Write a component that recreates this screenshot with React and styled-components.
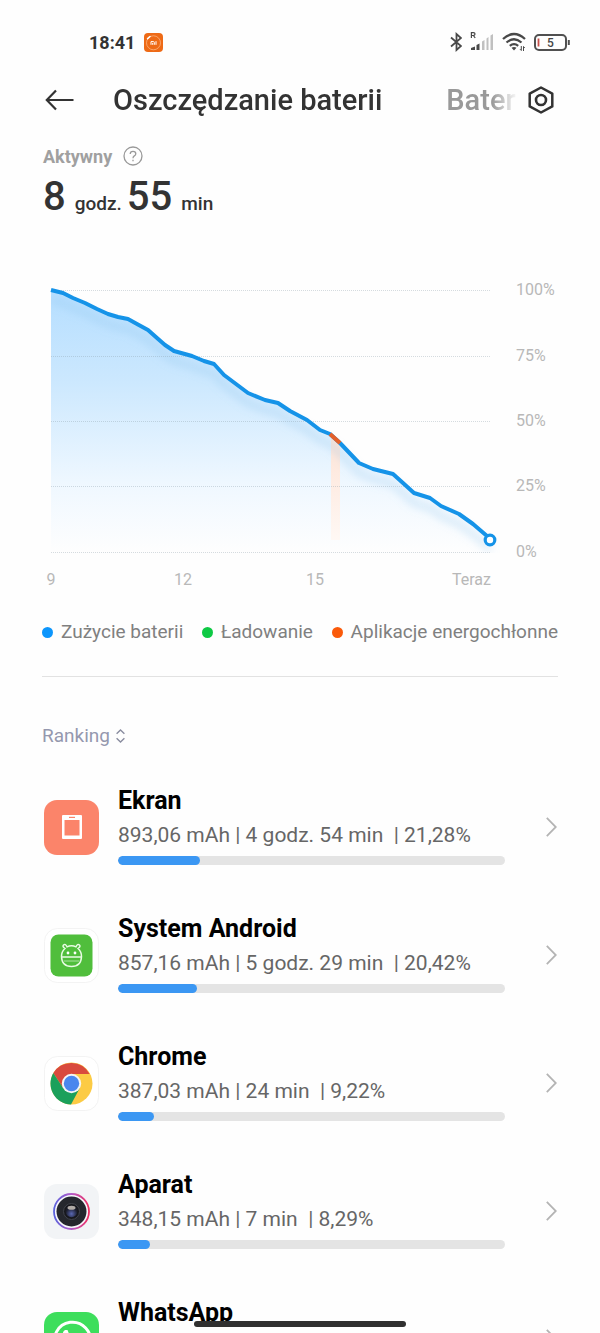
import React from 'react';
import styled, { createGlobalStyle } from 'styled-components';

const colors = {
    text: '#333333',
    black: '#000000',
    muted: '#999999',
    axis: '#b8b8b8',
    detail: '#666666',
    legend: '#808080',
    ranking: '#9598ae',
    line: '#1593e8',
    blue: '#0d96fc',
    green: '#0ec944',
    orange: '#fa5a0a',
    bar: '#3b97f3',
    track: '#e4e4e4',
};

const usage = [
    [9, 20], [21, 23], [31, 28], [43, 33], [55, 39], [66, 44], [76, 47], [86, 49],
    [95, 54], [106, 60], [115, 68], [123, 75], [132, 81], [150, 86], [162, 91], [172, 94],
    [182, 105], [194, 114], [206, 123], [223, 130], [236, 133], [248, 141], [265, 150],
    [278, 160], [288, 164], [298, 173], [317, 193], [331, 199], [351, 204], [361, 213],
    [372, 223], [388, 228], [399, 236], [417, 244], [431, 254], [445, 266], [448, 270],
];

const gridLines = [
    { y: 20, label: '100%' },
    { y: 86, label: '75%' },
    { y: 151, label: '50%' },
    { y: 216, label: '25%' },
    { y: 282, label: '0%' },
];

const toPath = (points) => 'M' + points.map((p) => p.join(' ')).join('L');

const GlobalStyle = createGlobalStyle`
    * {
        box-sizing: border-box;
    }

    body {
        margin: 0;
        background: #fefefe;
        color: ${colors.text};
        font-family: Roboto, 'Noto Sans', sans-serif;
    }

    button {
        border: 0;
        padding: 0;
        background: none;
        color: inherit;
        font: inherit;
        text-align: left;
        cursor: pointer;
    }

    svg {
        display: block;
        flex-shrink: 0;
    }
`;

const Screen = styled.div`
    height: 100vh;
    overflow: hidden;
    padding: 0 42px;
`;

const StatusBar = styled.div`
    display: flex;
    align-items: center;
    justify-content: space-between;
    height: 44px;
    margin-top: 20px;
    padding-left: 47px;
    margin-right: -12px;
`;

const StatusGroup = styled.div`
    display: flex;
    align-items: center;
    gap: ${({ $gap }) => $gap}px;
    font-size: 18px;
    font-weight: 700;
`;

const Header = styled.header`
    display: flex;
    align-items: center;
    height: 72px;
    padding: 0 4px 0 3px;
`;

const Tabs = styled.nav`
    display: flex;
    flex: 1;
    gap: 64px;
    min-width: 0;
    margin: 0 10px 0 39px;
    overflow: hidden;
    mask-image: linear-gradient(to right, #000 calc(100% - 26px), transparent);
`;

const Tab = styled.button`
    && {
        color: ${({ $active }) => ($active ? colors.text : colors.muted)};
        font-size: 29px;
        font-weight: 500;
        line-height: 40px;
        white-space: nowrap;
    }
`;

const Summary = styled.section`
    margin-bottom: 45px;
    padding-left: 1px;
`;

const SummaryLabel = styled.div`
    display: flex;
    align-items: center;
    gap: 11px;
    height: 40px;
    color: #a0a0a0;
    font-size: 18px;
    font-weight: 700;
`;

const Duration = styled.div`
    display: flex;
    align-items: baseline;
    line-height: 42px;
`;

const Amount = styled.span`
    font-size: 40px;
    font-weight: 500;
`;

const Unit = styled.span`
    margin: 0 5px 0 9px;
    font-size: 19px;
    font-weight: 500;
`;

const Chart = styled.svg`
    width: 100%;
    height: auto;

    text {
        fill: ${colors.axis};
        font-size: 16px;
    }
`;

const Legend = styled.ul`
    display: flex;
    flex-wrap: wrap;
    justify-content: space-between;
    margin: 0;
    padding: 20px 0 32px;
    border-bottom: 1px solid #e2e2e2;
    color: ${colors.legend};
    font-size: 19px;
    line-height: 24px;
    list-style: none;
`;

const LegendItem = styled.li`
    display: flex;
    align-items: center;
    gap: 8px;

    &::before {
        width: 11px;
        height: 11px;
        border-radius: 50%;
        background: ${({ $color }) => $color};
        content: '';
    }
`;

const SortButton = styled.button`
    && {
        display: flex;
        align-items: center;
        gap: 6px;
        margin: 46px 0 14px;
        color: ${colors.ranking};
        font-size: 19px;
        line-height: 26px;
    }
`;

const AppList = styled.ul`
    margin: 0;
    padding: 0;
    list-style: none;
`;

const AppRow = styled.button`
    && {
        display: flex;
        align-items: center;
        width: 100%;
        height: 128px;
        padding: 0 1px 0 2px;
    }
`;

const AppInfo = styled.div`
    flex: 1;
    align-self: flex-start;
    min-width: 0;
    padding-top: 22px;
    margin: 0 41px 0 19px;
`;

const AppName = styled.div`
    color: ${colors.black};
    font-size: 25px;
    font-weight: 700;
    line-height: 32px;
`;

const AppDetail = styled.div`
    margin: 2px 0 5px;
    color: ${colors.detail};
    font-size: 21px;
    line-height: 32px;
    white-space: pre;
`;

const Track = styled.div`
    height: 9px;
    overflow: hidden;
    border-radius: 5px;
    background: ${colors.track};
`;

const Fill = styled.div`
    height: 100%;
    border-radius: 5px;
    background: ${colors.bar};
`;

const HomeBar = styled.div`
    position: fixed;
    bottom: 6px;
    left: 50%;
    width: 212px;
    height: 6px;
    border-radius: 3px;
    background: #303030;
    transform: translateX(-50%);
`;

const MiIcon = () => (
    <svg width="19" height="19" viewBox="0 0 19 19" fill="none">
        <rect width="19" height="19" rx="4" fill="#ee6a16" />
        <circle cx="9.5" cy="9.8" r="7" stroke="#fbb37e" strokeWidth="0.8" />
        <path d="M3.6 5.6L6 3.5" stroke="#fff" strokeWidth="1.6" strokeLinecap="round" />
        <path d="M7 11.8V8.6H9.5Q10.3 8.6 10.3 9.4V11.8M8.7 10V11.8M12 8.2V11.8" stroke="#fff" strokeWidth="1" />
    </svg>
);

const BluetoothIcon = () => (
    <svg width="12" height="20" viewBox="0 0 12 20" fill="none" stroke="#484848" strokeWidth="1.8">
        <path d="M1 5.5L11 14L6.5 18V2L11 6L1 14.5" />
    </svg>
);

const SignalIcon = () => (
    <svg width="24" height="20" viewBox="0 0 24 20">
        <path d="M1.4 6V0.6H3.4Q5 0.6 5 2.1Q5 3.5 3.4 3.5H1.4M3.4 3.5L5.2 6" fill="none" stroke="#484848" strokeWidth="1.2" />
        <path d="M1 18V16L5 14.5V18ZM6.5 18V13L9.5 11.5V18Z" fill="#484848" />
        <path d="M12 18V9.5L14.5 8V18ZM16.5 18V6.5L18.5 5V18ZM20.5 18V3.5L23 2V18Z" fill="#c0c0c0" />
    </svg>
);

const WifiIcon = () => (
    <svg width="24" height="20" viewBox="0 0 24 20" fill="none" stroke="#484848" strokeWidth="2.3">
        <path d="M1 7Q12 -3 23 7M4.5 10.5Q12 4 19.5 10.5M7.8 13.8Q12 10.5 16.2 13.8" />
        <path d="M9.5 15.8Q12 14 14.5 15.8L12 18.5Z" fill="#484848" stroke="none" />
        <path d="M19.3 14V18.5L18 17.2M21.5 19V14.5L22.8 15.8" strokeWidth="1" />
    </svg>
);

const BatteryIcon = () => (
    <svg width="36" height="17" viewBox="0 0 36 17" fill="none">
        <rect x="1" y="1" width="31" height="15" rx="4" stroke="#505050" strokeWidth="2" />
        <path d="M34.8 6V11" stroke="#505050" strokeWidth="2" />
        <path d="M4.5 4.5V12.5" stroke="#c8504a" strokeWidth="1.8" />
        <text x="16.5" y="13" textAnchor="middle" fill="#444" fontSize="12" fontWeight="500">5</text>
    </svg>
);

const BackIcon = () => (
    <svg width="29" height="22" viewBox="0 0 29 22" fill="none" stroke="#333" strokeWidth="2.2">
        <path d="M28.5 11H2M11 1.5L1.8 11L11 20.5" />
    </svg>
);

const SettingsIcon = () => (
    <svg width="26" height="28" viewBox="0 0 26 28" fill="none" stroke="#333">
        <path d="M13 1.5L24.3 7.6V20.4L13 26.5L1.7 20.4V7.6Z" strokeWidth="2.5" strokeLinejoin="round" />
        <circle cx="13" cy="14" r="5" strokeWidth="2.6" />
    </svg>
);

const HelpIcon = () => (
    <svg width="20" height="20" viewBox="0 0 20 20" fill="none" stroke="#999" strokeWidth="1.3">
        <circle cx="10" cy="10" r="9" />
        <path d="M7.2 8Q7.2 5.3 10 5.3Q12.8 5.3 12.8 7.7Q12.8 9 11.3 9.9Q10 10.7 10 12.2M10 13.7V15.2" />
    </svg>
);

const SortIcon = () => (
    <svg width="9" height="14" viewBox="0 0 9 14" fill="none" stroke="#8a8da0" strokeWidth="1.4">
        <path d="M0.6 4.8L4.5 1L8.4 4.8M0.6 9.2L4.5 13L8.4 9.2" />
    </svg>
);

const ArrowIcon = () => (
    <svg width="11" height="20" viewBox="0 0 11 20" fill="none" stroke="#b4b4b4" strokeWidth="1.8">
        <path d="M0.8 0.8L9.8 10L0.8 19.2" />
    </svg>
);

const ScreenIcon = () => (
    <svg width="55" height="55" viewBox="0 0 55 55">
        <rect width="55" height="55" rx="13" fill="#fb846a" />
        <path d="M19 15H37Q38 15 38 16V38Q38 39 37 39H19Q18 39 18 38V16Q18 15 19 15ZM20.5 20V35.5H35.5V20Z" fill="#fff" fillRule="evenodd" />
        <path d="M25 17.4H31" stroke="#fb846a" strokeWidth="1.2" />
    </svg>
);

const AndroidIcon = () => (
    <svg width="55" height="55" viewBox="0 0 55 55" fill="none">
        <rect x="0.5" y="0.5" width="54" height="54" rx="13" fill="#fff" stroke="#f3f3f3" />
        <rect x="6.5" y="6.5" width="42" height="42" rx="8" fill="#50be3c" />
        <g stroke="#e9fbe4" strokeWidth="1.5">
            <path d="M21 20.5Q18 18.5 19.5 17Q21.5 15.5 23 18.8Q27.5 16.5 32 18.8Q33.5 15.5 35.5 17Q37 18.5 34 20.5Q37.5 23.5 37.5 28.5Q37.2 38.5 27.5 38.5Q17.8 38.5 17.5 28.5Q17.5 23.5 21 20.5Z" />
            <path d="M17.8 29H37.2" />
        </g>
        <path d="M19.5 33H35.5" stroke="#a9e39d" strokeWidth="1" />
        <circle cx="24" cy="25" r="1.4" fill="#fff" />
        <circle cx="31" cy="25" r="1.4" fill="#fff" />
    </svg>
);

const ChromeIcon = () => (
    <svg width="55" height="55" viewBox="0 0 55 55">
        <rect x="0.5" y="0.5" width="54" height="54" rx="13" fill="#fff" stroke="#f3f3f3" />
        <circle cx="27.5" cy="27.5" r="21" fill="#fccb44" />
        <path d="M27.5 27.5L19.3 32.2L9.3 17A21 21 0 0 1 45.7 18H27.5Z" fill="#d94a3d" />
        <path d="M9.3 17A21 21 0 0 0 27 48.5L35.7 32.3L27.5 27.5L19.3 32.3Z" fill="#1ba05b" />
        <circle cx="27.5" cy="27.5" r="9.7" fill="#f5f5f5" />
        <circle cx="27.5" cy="27.5" r="7.7" fill="#4a87ee" />
    </svg>
);

const CameraIcon = () => (
    <svg width="55" height="55" viewBox="0 0 55 55">
        <defs>
            <linearGradient id="ring">
                <stop offset="0" stopColor="#5a62dc" />
                <stop offset="0.5" stopColor="#b45cc8" />
                <stop offset="1" stopColor="#f02f62" />
            </linearGradient>
            <radialGradient id="lens" cy="0.7">
                <stop offset="0" stopColor="#5a68b4" />
                <stop offset="1" stopColor="#1b1d2c" />
            </radialGradient>
        </defs>
        <rect width="55" height="55" rx="13" fill="#f2f4f6" />
        <circle cx="27.5" cy="27.5" r="17.5" fill="#f8f8fc" stroke="url(#ring)" strokeWidth="1.8" />
        <circle cx="27.5" cy="27.5" r="15" fill="#25272d" />
        <circle cx="27.5" cy="27.5" r="8" fill="#17181d" stroke="#41434c" />
        <circle cx="27.5" cy="27.5" r="5.8" fill="url(#lens)" />
        <ellipse cx="27.5" cy="23.8" rx="4" ry="2" fill="#b0aaa6" />
    </svg>
);

const WhatsAppIcon = () => (
    <svg width="55" height="55" viewBox="0 0 55 55">
        <rect width="55" height="55" rx="13" fill="#3dde5c" />
        <path d="M10 46L12.5 36.5A18 18 0 1 1 19 43.5Z" fill="none" stroke="#fff" strokeWidth="3" />
        <path d="M21 18Q18 20 19 24Q22 34 32 37Q37 37 38 32L33 29.5L30.5 32Q26 30 23.5 25.5L25.5 23L23.5 18Z" fill="#fff" />
    </svg>
);

const apps = [
    { name: 'Ekran', detail: '893,06 mAh | 4 godz. 54 min  | 21,28%', percent: 21.28, Icon: ScreenIcon },
    { name: 'System Android', detail: '857,16 mAh | 5 godz. 29 min  | 20,42%', percent: 20.42, Icon: AndroidIcon },
    { name: 'Chrome', detail: '387,03 mAh | 24 min  | 9,22%', percent: 9.22, Icon: ChromeIcon },
    { name: 'Aparat', detail: '348,15 mAh | 7 min  | 8,29%', percent: 8.29, Icon: CameraIcon },
    { name: 'WhatsApp', Icon: WhatsAppIcon },
];

const BatteryChart = () => (
    <Chart viewBox="0 0 516 330" role="img" aria-label="Zużycie baterii">
        <defs>
            <linearGradient id="area" gradientUnits="userSpaceOnUse" x1="0" y1="20" x2="0" y2="283">
                <stop offset="0" stopColor="#b5deff" />
                <stop offset="0.35" stopColor="#cce8fe" />
                <stop offset="0.75" stopColor="#f0f8ff" />
                <stop offset="1" stopColor="#fefefe" />
            </linearGradient>
            <linearGradient id="drain" x1="0" y1="0" x2="0" y2="1">
                <stop offset="0" stopColor="#fde3d6" />
                <stop offset="1" stopColor="#fff8f4" />
            </linearGradient>
            <clipPath id="plot">
                <path d="M9 0H460V283H9Z" />
            </clipPath>
            <filter id="soft" x="-10%" y="-10%" width="120%" height="130%">
                <feGaussianBlur stdDeviation="4" />
            </filter>
        </defs>
        <path d={`${toPath(usage)}V283H9Z`} fill="url(#area)" />
        <path d="M289 166L298 174V270H289Z" fill="url(#drain)" />
        <g clipPath="url(#plot)">
            <path
                d={toPath(usage)}
                transform="translate(0 10)"
                fill="none"
                stroke="#8cc4ea"
                strokeOpacity="0.35"
                strokeWidth="6"
                filter="url(#soft)"
            />
        </g>
        {gridLines.map(({ y, label }) => (
            <g key={label}>
                <path d={`M9 ${y + 0.5}H448`} stroke="#8a9aa5" strokeOpacity="0.35" strokeDasharray="1 1" />
                <text x="474" y={y + 5}>{label}</text>
            </g>
        ))}
        <path d={toPath(usage)} fill="none" stroke={colors.line} strokeWidth="4" strokeLinejoin="round" />
        <path d="M288 164L298 173" stroke="#e4602a" strokeWidth="4" />
        <circle cx="448" cy="270" r="4.8" fill="#fff" stroke={colors.line} strokeWidth="3.2" />
        <text x="9" y="315" textAnchor="middle">9</text>
        <text x="141" y="315" textAnchor="middle">12</text>
        <text x="273" y="315" textAnchor="middle">15</text>
        <text x="449" y="315" textAnchor="end">Teraz</text>
    </Chart>
);

const AppItem = ({ name, detail, percent, Icon }) => (
    <li>
        <AppRow type="button">
            <Icon />
            <AppInfo>
                <AppName>{name}</AppName>
                {detail && (
                    <>
                        <AppDetail>{detail}</AppDetail>
                        <Track>
                            <Fill style={{ width: `${percent}%` }} />
                        </Track>
                    </>
                )}
            </AppInfo>
            <ArrowIcon />
        </AppRow>
    </li>
);

const App = () => (
    <Screen>
        <GlobalStyle />
        <StatusBar>
            <StatusGroup $gap={9}>
                18:41
                <MiIcon />
            </StatusGroup>
            <StatusGroup $gap={8}>
                <BluetoothIcon />
                <SignalIcon />
                <WifiIcon />
                <BatteryIcon />
            </StatusGroup>
        </StatusBar>
        <Header>
            <button type="button" aria-label="Wstecz">
                <BackIcon />
            </button>
            <Tabs>
                <Tab type="button" $active>Oszczędzanie baterii</Tab>
                <Tab type="button">Bater</Tab>
            </Tabs>
            <button type="button" aria-label="Ustawienia">
                <SettingsIcon />
            </button>
        </Header>
        <main>
            <Summary>
                <SummaryLabel>
                    Aktywny
                    <button type="button" aria-label="Pomoc">
                        <HelpIcon />
                    </button>
                </SummaryLabel>
                <Duration>
                    <Amount>8</Amount>
                    <Unit>godz.</Unit>
                    <Amount>55</Amount>
                    <Unit>min</Unit>
                </Duration>
            </Summary>
            <BatteryChart />
            <Legend>
                <LegendItem $color={colors.blue}>Zużycie baterii</LegendItem>
                <LegendItem $color={colors.green}>Ładowanie</LegendItem>
                <LegendItem $color={colors.orange}>Aplikacje energochłonne</LegendItem>
            </Legend>
            <SortButton type="button">
                Ranking
                <SortIcon />
            </SortButton>
            <AppList>
                {apps.map((app) => (
                    <AppItem key={app.name} {...app} />
                ))}
            </AppList>
        </main>
        <HomeBar />
    </Screen>
);

export default App;
